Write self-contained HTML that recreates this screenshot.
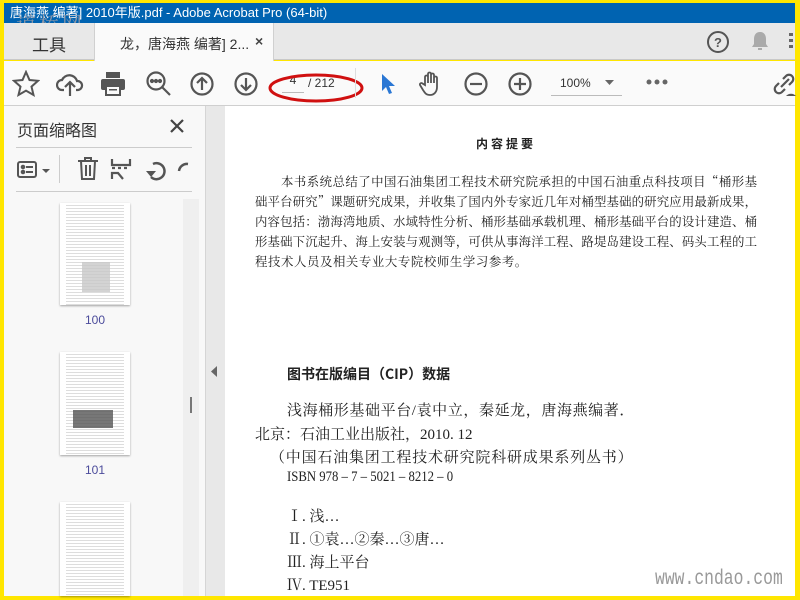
<!DOCTYPE html>
<html><head><meta charset="utf-8">
<style>
*{margin:0;padding:0;box-sizing:border-box}
body{width:800px;height:600px;overflow:hidden;background:#ffe600;position:relative;font-family:"Liberation Sans","Noto Sans CJK SC",sans-serif}
.abs{position:absolute}
#title{left:4px;top:3px;width:791px;height:20px;background:#0063b1;color:#fff;font-size:13px;line-height:20px;padding-left:6px;white-space:nowrap;overflow:hidden}
#tabs{left:4px;top:23px;width:791px;height:37px;background:#e8e8e8;border-bottom:1px solid #c8c8c8}
#tab{left:94px;top:23px;width:180px;height:38px;background:#fafafa;border-left:1px solid #d0d0d0;border-right:1px solid #d0d0d0}
#tool{left:4px;top:61px;width:791px;height:45px;background:#fafafa;border-bottom:1px solid #cfcfcf}
#side{left:4px;top:106px;width:201px;height:490px;background:#f8f8f8}
#gap{left:205px;top:106px;width:20px;height:490px;background:#e8e8e8;border-left:1px solid #d5d5d5}
#page{left:225px;top:106px;width:570px;height:490px;background:#fff}
.thumb{position:absolute;left:60px;width:70px;background:#fff;box-shadow:0 1px 2px rgba(0,0,0,.35);
background-image:repeating-linear-gradient(#fff 0 2px,#ddd 2px 3px);background-size:58px 100%;background-position:6px 0;background-repeat:no-repeat}
.lbl{position:absolute;left:60px;width:70px;text-align:center;color:#4b4b9b;font-size:12px}
.pt{font-family:"Liberation Serif","Noto Serif CJK SC",serif;color:#222;position:absolute;white-space:nowrap}
.pl{position:absolute;left:255px;width:502px;font-family:"Noto Serif CJK SC",serif;font-size:12.4px;color:#222;text-align:justify;text-align-last:justify;white-space:nowrap}
svg{position:absolute}
</style></head><body>
<div id="title" class="abs">唐海燕 编著] 2010年版.pdf - Adobe Acrobat Pro (64-bit)</div>
<div class="abs" style="left:16px;top:8px;color:#8a96a8;font-size:20px;letter-spacing:3px;font-family:'Noto Serif CJK SC',serif">道桥网</div>
<div id="tabs" class="abs"></div>
<div class="abs" style="left:32px;top:31px;font-size:17px;color:#333">工具</div>
<div id="tab" class="abs"></div>
<div class="abs" style="left:120px;top:34px;font-size:14px;color:#333">龙，唐海燕 编著] 2...</div>
<div class="abs" style="left:255px;top:33px;font-size:14px;color:#444;font-weight:bold">×</div>
<svg style="left:705px;top:29px" width="26" height="26"><circle cx="13" cy="13" r="10" fill="none" stroke="#555" stroke-width="2"/><text x="13" y="18" font-size="13" text-anchor="middle" fill="#555" font-weight="bold" font-family="Liberation Sans">?</text></svg>
<svg style="left:750px;top:30px" width="20" height="22"><path d="M10 2c-4 0-6 3-6 7v5l-2 3h16l-2-3V9c0-4-2-7-6-7z" fill="#aaa"/><rect x="8" y="18" width="4" height="2" fill="#aaa"/></svg>
<div class="abs" style="left:789px;top:33px;width:4px;height:16px;background:repeating-linear-gradient(#666 0 3px,transparent 3px 6px)"></div>
<div id="tool" class="abs"></div>
<svg style="left:12px;top:70px" width="28" height="28" fill="none" stroke="#555" stroke-width="2"><path d="M14 2l3.5 8 8.5.8-6.5 5.8 2 8.4L14 20.6 6.5 25l2-8.4L2 10.8l8.5-.8z"/></svg>
<svg style="left:56px;top:70px" width="28" height="28" fill="none" stroke="#555" stroke-width="2.2"><path d="M8 20H6a5 5 0 010-10 8 8 0 0115 1 4.5 4.5 0 011 9h-2"/><path d="M14 26V13M9 17l5-5 5 5"/></svg>
<svg style="left:100px;top:71px" width="26" height="26" fill="#555"><rect x="6" y="1" width="14" height="6"/><rect x="1" y="8" width="24" height="11" rx="2"/><rect x="6" y="15" width="14" height="9" fill="#fafafa" stroke="#555" stroke-width="2"/><rect x="9" y="18" width="8" height="1.5"/></svg>
<svg style="left:145px;top:70px" width="28" height="28" fill="none" stroke="#555" stroke-width="2.2"><circle cx="11" cy="11" r="8.5"/><path d="M17 17l8 8"/><circle cx="7" cy="11" r="1" fill="#555"/><circle cx="11" cy="11" r="1" fill="#555"/><circle cx="15" cy="11" r="1" fill="#555"/></svg>
<svg style="left:189px;top:71px" width="26" height="26" fill="none" stroke="#555" stroke-width="2.2"><circle cx="13" cy="13" r="10.5"/><path d="M13 19V7M8 12l5-5 5 5"/></svg>
<svg style="left:233px;top:71px" width="26" height="26" fill="none" stroke="#555" stroke-width="2.2"><circle cx="13" cy="13" r="10.5"/><path d="M13 7v12M8 14l5 5 5-5"/></svg>
<div class="abs" style="left:282px;top:73px;width:22px;height:20px;border-bottom:1px solid #bbb;font-size:12px;color:#333;text-align:center">4</div>
<div class="abs" style="left:308px;top:76px;font-size:12px;color:#333">/ 212</div>
<svg style="left:266px;top:70px" width="100" height="36"><ellipse cx="50" cy="18" rx="46" ry="13" fill="none" stroke="#d01010" stroke-width="3"/></svg>
<div class="abs" style="left:355px;top:68px;width:1px;height:30px;background:#ddd"></div>
<svg style="left:379px;top:72px" width="18" height="24"><path d="M3 2v17l4-4 3 7 3-1-3-7h6z" fill="#2a77d4"/></svg>
<svg style="left:418px;top:70px" width="26" height="28" fill="none" stroke="#555" stroke-width="1.8"><path d="M7 15V7a1.5 1.5 0 013 0v6V4a1.5 1.5 0 013 0v9V5a1.5 1.5 0 013 0v8V8a1.5 1.5 0 013 0v9c0 5-3 8-7 8s-5-2-7-5l-3-5a1.5 1.5 0 012.5-1.5z"/></svg>
<svg style="left:463px;top:71px" width="26" height="26" fill="none" stroke="#555" stroke-width="2.2"><circle cx="13" cy="13" r="10.5"/><path d="M7 13h12"/></svg>
<svg style="left:507px;top:71px" width="26" height="26" fill="none" stroke="#555" stroke-width="2.2"><circle cx="13" cy="13" r="10.5"/><path d="M7 13h12M13 7v12"/></svg>
<div class="abs" style="left:551px;top:71px;width:71px;height:25px;border-bottom:1px solid #bbb"></div>
<div class="abs" style="left:560px;top:76px;font-size:12px;color:#333">100%</div>
<svg style="left:605px;top:80px" width="10" height="6"><path d="M0 0h9l-4.5 5z" fill="#666"/></svg>
<svg style="left:646px;top:79px" width="22" height="6" fill="#666"><circle cx="3" cy="3" r="2.5"/><circle cx="11" cy="3" r="2.5"/><circle cx="19" cy="3" r="2.5"/></svg>
<svg style="left:772px;top:70px" width="24" height="28" fill="none" stroke="#555" stroke-width="2.2"><path d="M11 9l3-3a4 4 0 016 6l-3 3M13 19l-3 3a4 4 0 01-6-6l3-3M9 17l8-8"/><path d="M14 26a6 5 0 0110 0z" fill="#555" stroke="none"/></svg>
<div id="side" class="abs"></div>
<div class="abs" style="left:17px;top:117px;font-size:16px;color:#333">页面缩略图</div>
<svg style="left:170px;top:119px" width="14" height="14" stroke="#444" stroke-width="2.2"><path d="M1 1l12 12M13 1L1 13"/></svg>
<div class="abs" style="left:16px;top:147px;width:176px;height:1px;background:#ccc"></div>
<div class="abs" style="left:16px;top:191px;width:176px;height:1px;background:#ccc"></div>
<svg style="left:17px;top:161px" width="36" height="18" fill="none" stroke="#555" stroke-width="2"><rect x="1" y="1" width="18" height="15" rx="2"/><circle cx="6" cy="6" r="1.3" fill="#555"/><circle cx="6" cy="11" r="1.3" fill="#555"/><path d="M9 6h7M9 11h7"/><path d="M25 8h8l-4 4z" fill="#555" stroke="none"/></svg>
<div class="abs" style="left:59px;top:155px;width:1px;height:28px;background:#ccc"></div>
<svg style="left:77px;top:157px" width="22" height="24" fill="none" stroke="#555" stroke-width="2"><path d="M1 4h20M8 4V1h6v3M4 4l1 18h12l1-18M9 8v11M13 8v11"/></svg>
<svg style="left:110px;top:158px" width="22" height="22" fill="none" stroke="#555" stroke-width="2.2"><path d="M2 1v6h18V1M2 21v-6h6l5 6M2 10h3M8 10h3M14 10h3"/></svg>
<svg style="left:143px;top:158px" width="24" height="24" fill="none" stroke="#555" stroke-width="2.5"><path d="M8 19a8 8 0 102-13"/><path d="M3 13l5 6 5-6z" fill="#555" stroke="none"/></svg>
<svg style="left:176px;top:158px" width="16" height="24" fill="none" stroke="#555" stroke-width="2.5"><path d="M12 6a8 8 0 00-9 7"/></svg>
<div class="abs" style="left:183px;top:199px;width:16px;height:397px;background:#efefef"></div>
<div class="abs" style="left:190px;top:397px;width:2px;height:16px;background:#777"></div>
<div class="thumb" style="top:203px;height:102px"></div>
<div class="abs" style="left:82px;top:262px;width:28px;height:30px;background:#c8c8c8;opacity:.8"></div>
<div class="lbl" style="top:313px">100</div>
<div class="thumb" style="top:352px;height:103px"></div>
<div class="abs" style="left:73px;top:410px;width:40px;height:18px;background:#555;opacity:.8"></div>
<div class="lbl" style="top:463px">101</div>
<div class="thumb" style="top:502px;height:94px"></div>
<div id="gap" class="abs"></div>
<svg style="left:210px;top:366px" width="8" height="12"><path d="M7 0v11L1 5.5z" fill="#666"/></svg>
<div id="page" class="abs"></div>
<div class="pt" style="left:476px;top:135px;font-size:12px;font-weight:bold;letter-spacing:3px;font-family:'Noto Sans CJK SC',sans-serif">内容提要</div>
<div class="pl" style="top:172px;padding-left:26px">本书系统总结了中国石油集团工程技术研究院承担的中国石油重点科技项目“桶形基</div>
<div class="pl" style="top:192px">础平台研究”课题研究成果，并收集了国内外专家近几年对桶型基础的研究应用最新成果，</div>
<div class="pl" style="top:212px">内容包括：渤海湾地质、水域特性分析、桶形基础承载机理、桶形基础平台的设计建造、桶</div>
<div class="pl" style="top:232px">形基础下沉起升、海上安装与观测等，可供从事海洋工程、路堤岛建设工程、码头工程的工</div>
<div class="pl" style="top:252px;text-align-last:left;letter-spacing:0.6px">程技术人员及相关专业大专院校师生学习参考。</div>
<div class="pt" style="left:287px;top:364px;font-size:14px;font-weight:bold;font-family:'Noto Sans CJK SC',sans-serif">图书在版编目（CIP）数据</div>
<div class="pt" style="left:287px;top:399px;font-size:15px;letter-spacing:0.6px">浅海桶形基础平台/袁中立，秦延龙，唐海燕编著．</div>
<div class="pt" style="left:255px;top:423px;font-size:15px">北京：石油工业出版社，2010. 12</div>
<div class="pt" style="left:270px;top:446px;font-size:15px;letter-spacing:0.8px">（中国石油集团工程技术研究院科研成果系列丛书）</div>
<div class="pt" style="left:287px;top:469px;font-size:15px;transform:scaleX(.85);transform-origin:left">ISBN 978 – 7 – 5021 – 8212 – 0</div>
<div class="pt" style="left:287px;top:505px;font-size:15px">Ⅰ. 浅…</div>
<div class="pt" style="left:287px;top:528px;font-size:15px">Ⅱ. ①袁…②秦…③唐…</div>
<div class="pt" style="left:287px;top:551px;font-size:15px">Ⅲ. 海上平台</div>
<div class="pt" style="left:287px;top:574px;font-size:15px">Ⅳ. TE951</div>
<div class="abs" style="left:655px;top:568px;font-size:21px;color:#999;font-family:'Liberation Mono',monospace;transform:scaleX(.78);transform-origin:left">www.cndao.com</div>
</body></html>
